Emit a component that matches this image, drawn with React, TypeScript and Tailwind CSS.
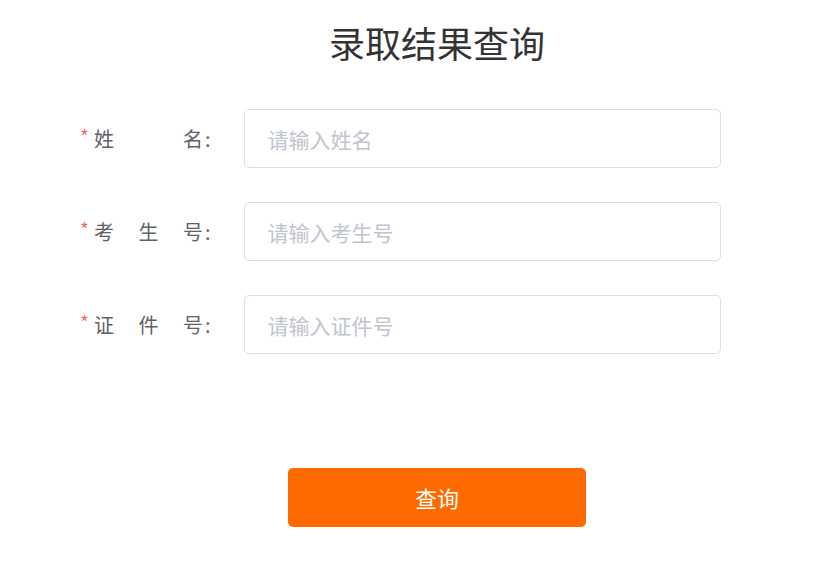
import React from "react";

const fields = [
  { chars: ["姓", "名"], placeholder: "请输入姓名" },
  { chars: ["考", "生", "号"], placeholder: "请输入考生号" },
  { chars: ["证", "件", "号"], placeholder: "请输入证件号" },
];

export default function App() {
  return (
    <div
      className="w-[830px] h-[562px] bg-white pl-[44px]"
      style={{ fontFamily: '"Noto Sans CJK SC", "Noto Sans", sans-serif' }}
    >
      <h1 className="pt-[21px] text-center text-[36px] leading-[42px] font-normal text-[#333333]">
        录取结果查询
      </h1>

      <div className="mt-[46px] ml-[36px] flex flex-col gap-[34px]">
        {fields.map((f) => (
          <div key={f.placeholder} className="flex items-center">
            <span className="w-[14px] text-[19px] leading-none text-[#f56c6c] -mt-[6px]">*</span>
            <div className="w-[109px] flex justify-between text-[20px] text-[#606266]">
              {f.chars.map((c) => (
                <span key={c}>{c}</span>
              ))}
            </div>
            <span className="text-[20px] text-[#606266] ml-[2px]">:</span>
            <input
              placeholder={f.placeholder}
              className="ml-[33px] w-[477px] h-[59px] rounded-[5px] border border-[#dcdfe6] px-[23px] text-[21px] text-[#606266] placeholder:text-[#c0c4cc] outline-none"
            />
          </div>
        ))}
      </div>

      <div className="mt-[114px] flex justify-center">
        <button className="w-[298px] h-[59px] rounded-[5px] bg-[#ff6a00] text-white text-[22px]">
          查询
        </button>
      </div>
    </div>
  );
}
